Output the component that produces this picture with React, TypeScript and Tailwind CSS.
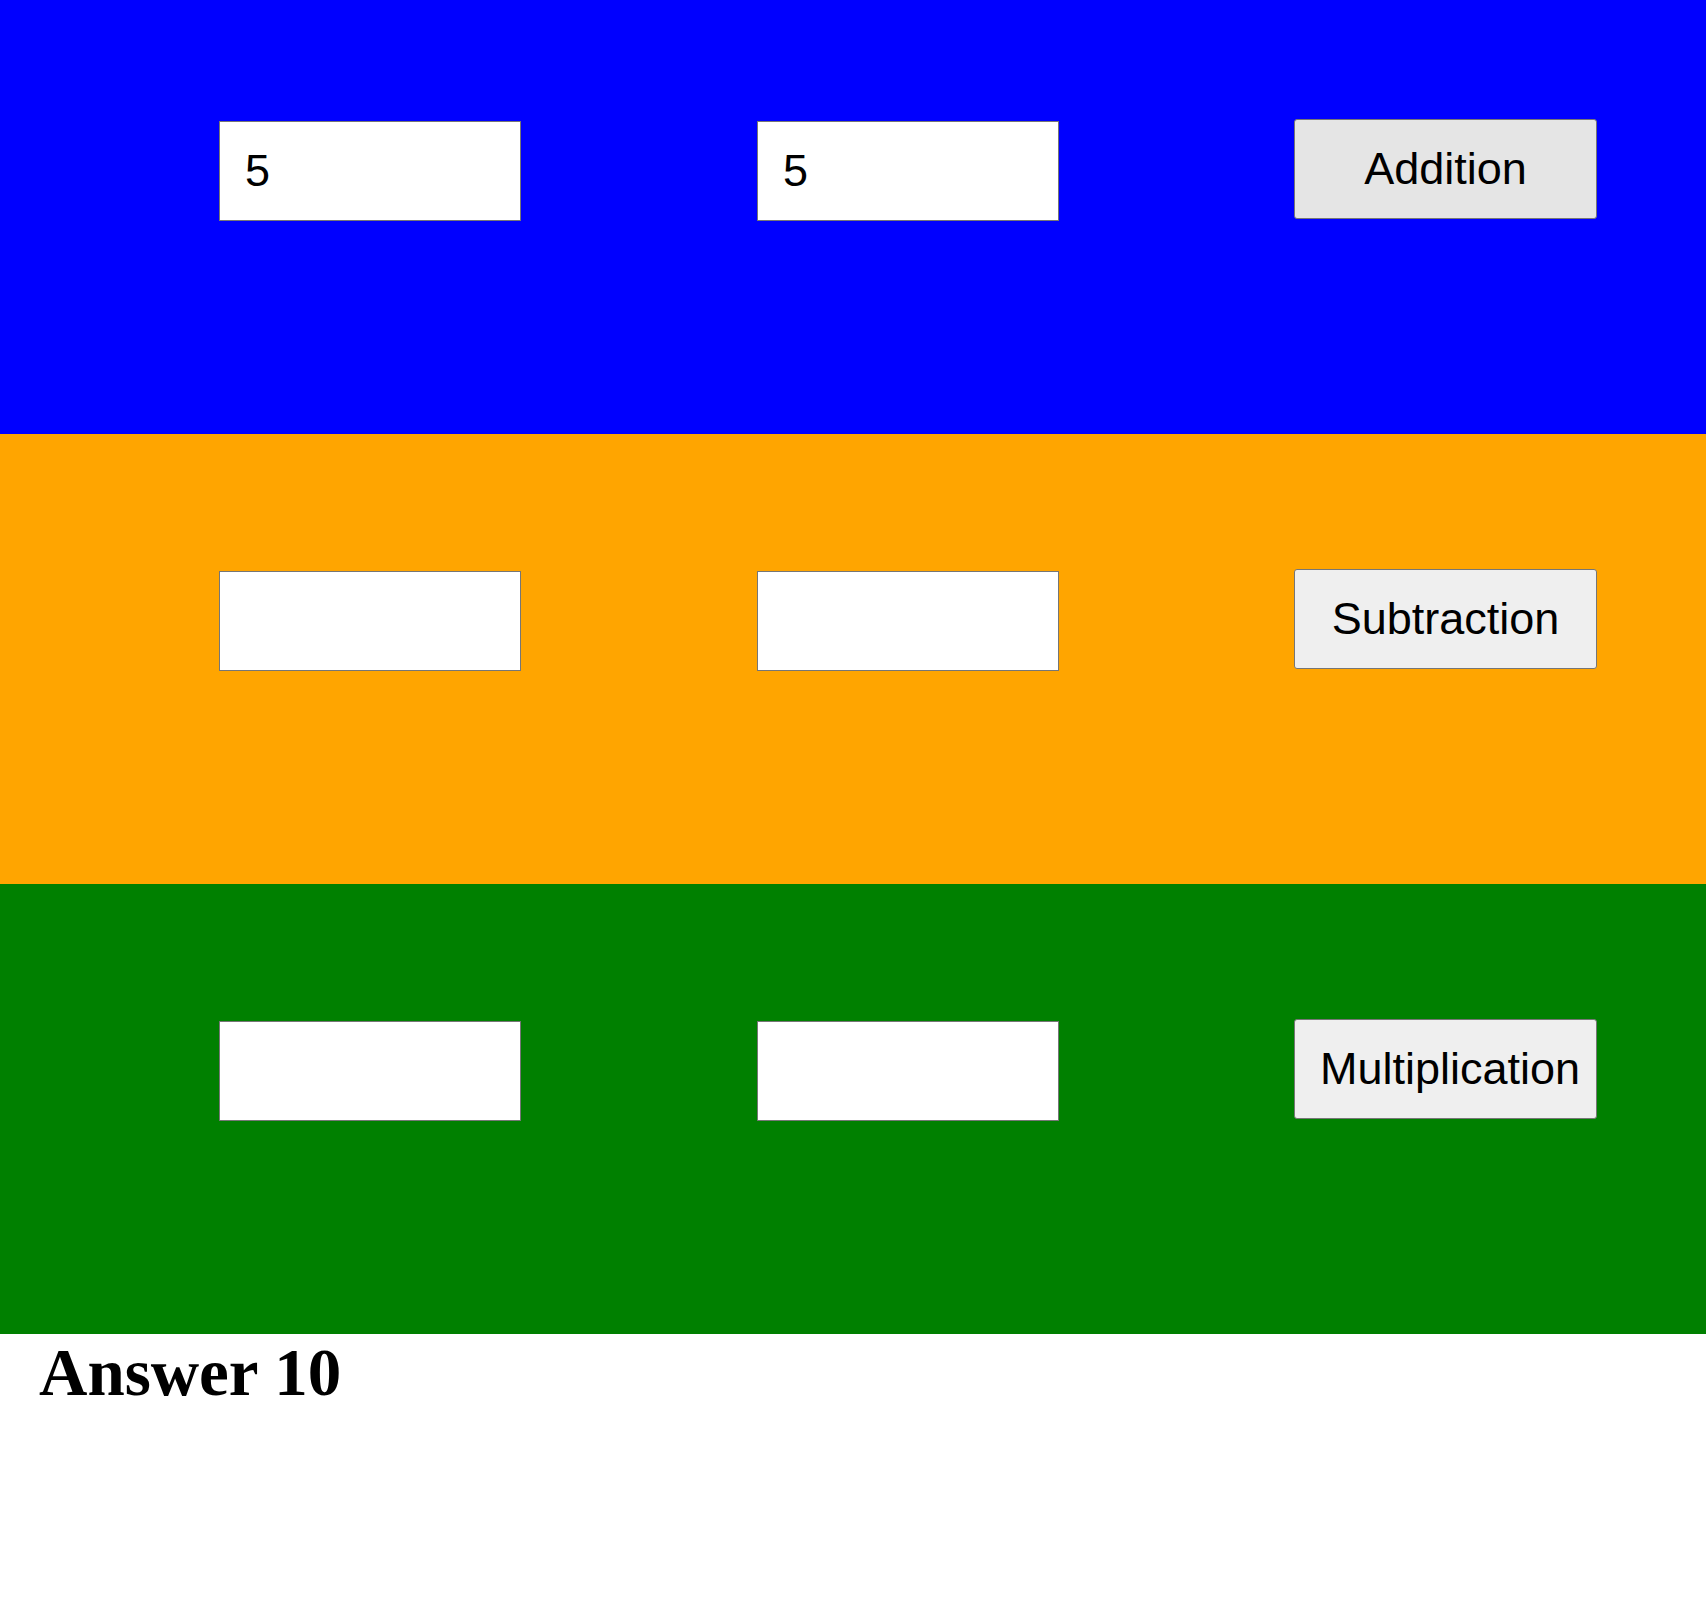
import { useState } from "react";

const Row = ({
    bg,
    h,
    top,
    label,
    btnBg,
    a,
    b,
    setA,
    setB,
    onClick,
}: {
    bg: string;
    h: string;
    top: string;
    label: string;
    btnBg: string;
    a: string;
    b: string;
    setA: (v: string) => void;
    setB: (v: string) => void;
    onClick: () => void;
}) => {
    return (
        <div className={`${bg} ${h} ${top} w-full flex items-start pl-[219px]`}>
            <input
                value={a}
                onChange={(e) => setA(e.target.value)}
                className="mt-[2px] w-[302px] h-[100px] bg-white border border-[#767676] px-[25px] text-[45px] text-black outline-none"
            />
            <input
                value={b}
                onChange={(e) => setB(e.target.value)}
                className="ml-[236px] mt-[2px] w-[302px] h-[100px] bg-white border border-[#767676] px-[25px] text-[45px] text-black outline-none"
            />
            <button
                onClick={onClick}
                className={`ml-[235px] w-[303px] h-[100px] ${btnBg} border border-[#767676] rounded-[3px] px-[25px] text-[45px] text-black whitespace-nowrap text-center overflow-visible`}
            >
                {label}
            </button>
        </div>
    );
};

export default function App() {
    const [a1, setA1] = useState("5");
    const [b1, setB1] = useState("5");
    const [a2, setA2] = useState("");
    const [b2, setB2] = useState("");
    const [a3, setA3] = useState("");
    const [b3, setB3] = useState("");
    const [answer, setAnswer] = useState(10);

    return (
        <div className="w-[1706px] min-h-[1613px] bg-white font-['Liberation_Sans',Arial,sans-serif]">
            <Row
                bg="bg-[#0000ff]"
                h="h-[434px]"
                top="pt-[119px]"
                label="Addition"
                btnBg="bg-[#e5e5e5]"
                a={a1}
                b={b1}
                setA={setA1}
                setB={setB1}
                onClick={() => setAnswer(Number(a1) + Number(b1))}
            />
            <Row
                bg="bg-[#ffa500]"
                h="h-[450px]"
                top="pt-[135px]"
                label="Subtraction"
                btnBg="bg-[#efefef]"
                a={a2}
                b={b2}
                setA={setA2}
                setB={setB2}
                onClick={() => setAnswer(Number(a2) - Number(b2))}
            />
            <Row
                bg="bg-[#008000]"
                h="h-[450px]"
                top="pt-[135px]"
                label="Multiplication"
                btnBg="bg-[#efefef]"
                a={a3}
                b={b3}
                setA={setA3}
                setB={setB3}
                onClick={() => setAnswer(Number(a3) * Number(b3))}
            />
            <h1 className="pl-[39px] text-[67px] font-bold leading-[normal] text-black font-['Liberation_Serif','Times_New_Roman',serif]">
                Answer {answer}
            </h1>
        </div>
    );
}
